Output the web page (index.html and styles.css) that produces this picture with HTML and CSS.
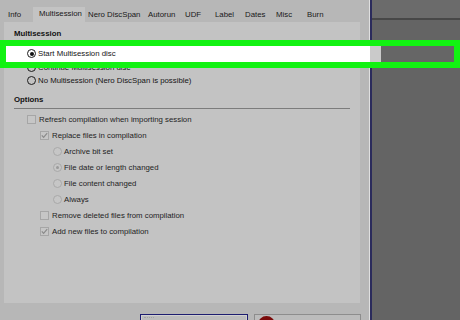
FILE: index.html
```html
<!DOCTYPE html>
<html>
<head>
<meta charset="utf-8">
<link rel="stylesheet" href="styles.css">
</head>
<body>
<div class="dialog">
  <div class="tabs">
    <div class="tab t-info">Info</div>
    <div class="tab active t-multi">Multisession</div>
    <div class="tab t-nero">Nero DiscSpan</div>
    <div class="tab t-auto">Autorun</div>
    <div class="tab t-udf">UDF</div>
    <div class="tab t-label">Label</div>
    <div class="tab t-dates">Dates</div>
    <div class="tab t-misc">Misc</div>
    <div class="tab t-burn">Burn</div>
  </div>
  <div class="panel">
    <div class="group-title">Multisession</div>
    <div class="radio-list">
      <div class="row ms-row start-row"><span class="radio on dark white"></span><span class="lbl">Start Multisession disc</span></div>
      <div class="row ms-row"><span class="radio dark"></span><span class="lbl">Continue Multisession disc</span></div>
      <div class="row ms-row"><span class="radio dark"></span><span class="lbl">No Multisession (Nero DiscSpan is possible)</span></div>
    </div>
    <div class="group-title options-title">Options</div>
    <div class="opts">
      <div class="row opt l1"><span class="check"></span><span class="lbl">Refresh compilation when importing session</span></div>
      <div class="row opt l2"><span class="check"><svg viewBox="0 0 9 9" width="9" height="9"><polyline points="1.8,4.3 3.6,6.3 7.2,2.2" fill="none" stroke="#8a8a8a" stroke-width="1.2"/></svg></span><span class="lbl">Replace files in compilation</span></div>
      <div class="row opt l3"><span class="radio"></span><span class="lbl">Archive bit set</span></div>
      <div class="row opt l3"><span class="radio on"></span><span class="lbl">File date or length changed</span></div>
      <div class="row opt l3"><span class="radio"></span><span class="lbl">File content changed</span></div>
      <div class="row opt l3"><span class="radio"></span><span class="lbl">Always</span></div>
      <div class="row opt l2"><span class="check"></span><span class="lbl">Remove deleted files from compilation</span></div>
      <div class="row opt l2"><span class="check"><svg viewBox="0 0 9 9" width="9" height="9"><polyline points="1.8,4.3 3.6,6.3 7.2,2.2" fill="none" stroke="#8a8a8a" stroke-width="1.2"/></svg></span><span class="lbl">Add new files to compilation</span></div>
    </div>
  </div>
  <div class="buttons">
    <div class="btn default"><span class="focus-mark"></span></div>
    <div class="btn"><span class="nero-icon"></span></div>
  </div>
</div>
<div class="desktop">
  <div class="desk-top"></div>
</div>
<div class="highlight"></div>
</body>
</html>
```

FILE: styles.css
```css
html, body {
  margin: 0;
  padding: 0;
}
body {
  width: 460px;
  height: 320px;
  overflow: hidden;
  display: flex;
  background: #646464;
  font-family: "Liberation Sans", Arial, sans-serif;
  font-size: 7.8px;
  color: #141414;
  position: relative;
}
.dialog {
  width: 370px;
  height: 320px;
  box-sizing: border-box;
  flex: none;
  background: #b7b7b7;
  border-right: 1px solid #e0e0e0;
  box-shadow: 2px 0 0 #2b2b5c;
  display: flex;
  flex-direction: column;
}
.tabs {
  height: 22px;
  display: flex;
  align-items: flex-start;
  flex: none;
}
.tab {
  box-sizing: border-box;
  height: 22px;
  padding-top: 10px;
  line-height: 10px;
  white-space: nowrap;
  color: #181818;
}
.tab.active {
  margin-top: 7px;
  height: 15px;
  padding-top: 2px;
  background: #c3c3c3;
}
.t-info { width: 33px; padding-left: 8px; }
.t-multi { width: 52px; padding-left: 6px; }
.t-nero { width: 58px; padding-left: 3px; }
.t-auto { width: 38px; padding-left: 5px; }
.t-udf { width: 29px; padding-left: 4px; }
.t-label { width: 30px; padding-left: 5px; }
.t-dates { width: 31px; padding-left: 5px; }
.t-misc { width: 31px; padding-left: 5px; }
.t-burn { width: 38px; padding-left: 5px; }

.panel {
  margin: 0 9px 0 4px;
  height: 281px;
  box-sizing: border-box;
  background: #c3c3c3;
  padding: 7px 10px 0 10px;
  flex: none;
}
.group-title {
  font-weight: bold;
  line-height: 10px;
  color: #111111;
}
.radio-list {
  margin-top: 8px;
}
.row {
  display: flex;
  align-items: center;
  white-space: nowrap;
}
.ms-row {
  height: 13.5px;
  padding-left: 13px;
}
.ms-row .lbl {
  margin-left: 2px;
}
.start-row {
  position: relative;
  z-index: 2;
}
.options-title {
  margin-top: 7.5px;
  padding-bottom: 3px;
  border-bottom: 1px solid #7c7c7c;
}
.opts {
  margin-top: 2px;
}
.opt {
  height: 16px;
}
.opt .lbl {
  margin-left: 3px;
  color: #1e1e1e;
}
.l1 { padding-left: 13px; }
.l2 { padding-left: 26px; }
.l3 { padding-left: 39px; }
.l3 .lbl { margin-left: 2px; }

.radio {
  width: 9px;
  height: 9px;
  box-sizing: border-box;
  border-radius: 50%;
  border: 1px solid #a9a9a9;
  background: #c6c6c6;
  display: flex;
  align-items: center;
  justify-content: center;
  flex: none;
}
.radio.on::after {
  content: "";
  width: 3px;
  height: 3px;
  border-radius: 50%;
  background: #9a9a9a;
}
.radio.dark {
  border-color: #1c1c1c;
  background: transparent;
}
.radio.dark.white {
  background: #ffffff;
}
.radio.dark.on::after {
  background: #111111;
  width: 4px;
  height: 4px;
}
.check {
  width: 9px;
  height: 9px;
  box-sizing: border-box;
  border: 1px solid #a6a6a6;
  background: #c6c6c6;
  flex: none;
  display: flex;
  align-items: center;
  justify-content: center;
}
.check svg {
  display: block;
  flex: none;
}

.buttons {
  margin-top: 11px;
  padding-left: 140px;
  display: flex;
  gap: 6px;
  flex: none;
}
.btn {
  height: 22px;
  box-sizing: border-box;
  border: 1px solid #8d8d8d;
  background: #bcbcbc;
  width: 107px;
  position: relative;
  display: flex;
  padding: 2px 0 0 3px;
}
.btn.default {
  width: 108px;
  border-color: #1d1d70;
  box-shadow: inset 0 0 0 1px #d0d0d0;
}
.focus-mark {
  width: 10px;
  height: 3px;
  border-top: 1px dotted #a4a4a4;
}
.nero-icon {
  width: 17px;
  height: 17px;
  border-radius: 50%;
  background: #7a0b0b;
  margin-top: -1px;
}

.desktop {
  flex: 1;
  background: #646464;
  margin-left: 2px;
}
.desk-top {
  height: 18px;
  background: #6b6b6b;
  border-bottom: 2px solid #474747;
}

.highlight {
  position: absolute;
  left: 0;
  top: 40px;
  width: 460px;
  height: 28px;
  box-sizing: border-box;
  border: 6px solid #12f212;
  background: linear-gradient(to right, #ffffff 0 364px, #cacaca 364px 375px, #666666 375px);
  z-index: 1;
}
```
